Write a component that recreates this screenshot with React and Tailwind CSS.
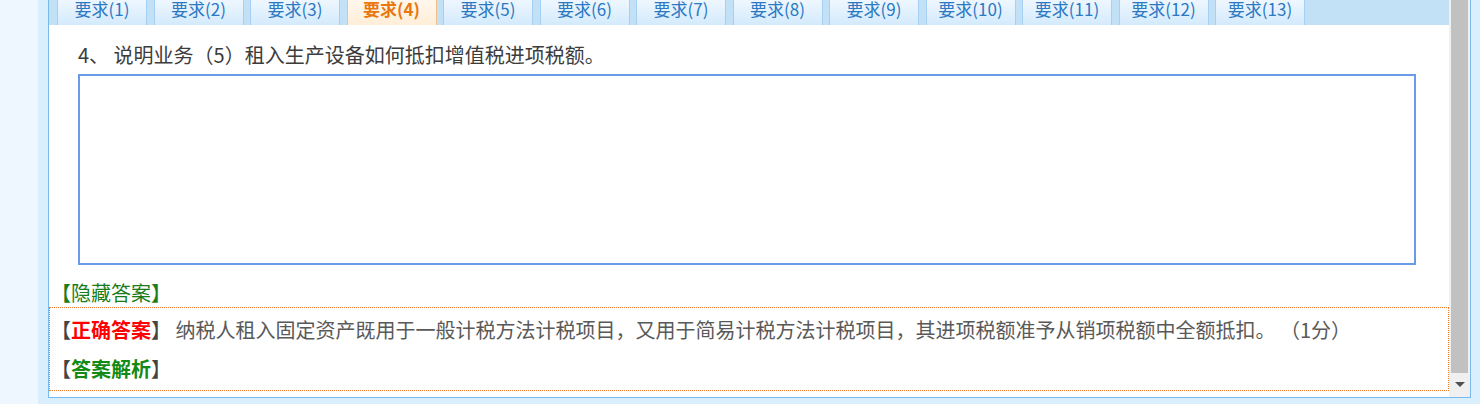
import React from 'react';

const tabs = Array.from({ length: 13 }, (_, i) => `要求(${i + 1})`);

const Tab = ({ label, active }) => (
  <div
    className={`w-[90px] h-[33px] shrink-0 flex items-center justify-center rounded-t-[3px] border-x text-[17px] ${
      active
        ? 'bg-gradient-to-b from-[#fffaf3] to-[#ffeed8] border-[#f3c08c] text-[#e8780f] font-bold'
        : 'bg-gradient-to-b from-[#f7fbff] to-[#d3eafc] border-[#a6d0f1] text-[#2b78c3]'
    }`}
  >
    {label}
  </div>
);

const Scrollbar = () => (
  <div className="w-[21px] h-full bg-[#f0f0f0] flex flex-col">
    <div className="ml-[2px] w-[17px] h-[373px] bg-[#c1c1c1]" />
    <div className="flex-1 flex items-center justify-center">
      <div className="w-0 h-0 border-x-[5px] border-x-transparent border-t-[5px] border-t-[#505050] mb-[2px]" />
    </div>
  </div>
);

export default function App() {
  return (
    <div className="w-[1480px] h-[404px] overflow-hidden bg-[#eef6ff] font-['Noto_Sans_CJK_SC',sans-serif]">
      <div className="ml-[38px] h-full bg-[#daeffd] pl-[10px] pr-[9px]">
        <div className="h-[398px] bg-white border-x border-b border-[#7ab9ec] flex">
          {/* Main content */}
          <div className="flex-1 min-w-0 overflow-hidden">
            {/* Tab strip, scrolled so the tops are hidden */}
            <div className="h-[25px] bg-[#c2e0f6] pl-[8px] flex items-end gap-[6.5px] overflow-hidden">
              {tabs.map((t, i) => (
                <Tab key={t} label={t} active={i === 3} />
              ))}
            </div>

            {/* Question */}
            <div className="mt-[15px] pl-[29px] text-[20px] leading-[30px] text-[#3c3c3c]">
              4、 说明业务（5）租入生产设备如何抵扣增值税进项税额。
            </div>
            <div className="mt-[4px] ml-[29px] w-[1338px] h-[191px] border-2 border-[#6a9be9] bg-white" />

            <div className="mt-[14px] pl-[2px] text-[20px] leading-[28px] text-[#1a7d1a]">
              【隐藏答案】
            </div>

            {/* Answer box */}
            <div className="border border-dotted border-[#f07a2a] pt-[7px] pb-[6px] pl-[1px] text-[20px] leading-[30px]">
              <div className="text-[#595959]">
                <span className="text-[#444]">【</span>
                <span className="text-[#ff0000] font-bold">正确答案</span>
                <span className="text-[#444]">】</span>
                {' '}纳税人租入固定资产既用于一般计税方法计税项目，又用于简易计税方法计税项目，其进项税额准予从销项税额中全额抵扣。{' '}（1分）
              </div>
              <div className="mt-[9px] text-[#444]">
                【<span className="text-[#138a13] font-bold">答案解析</span>】
              </div>
            </div>
          </div>
          <Scrollbar />
        </div>
      </div>
    </div>
  );
}
